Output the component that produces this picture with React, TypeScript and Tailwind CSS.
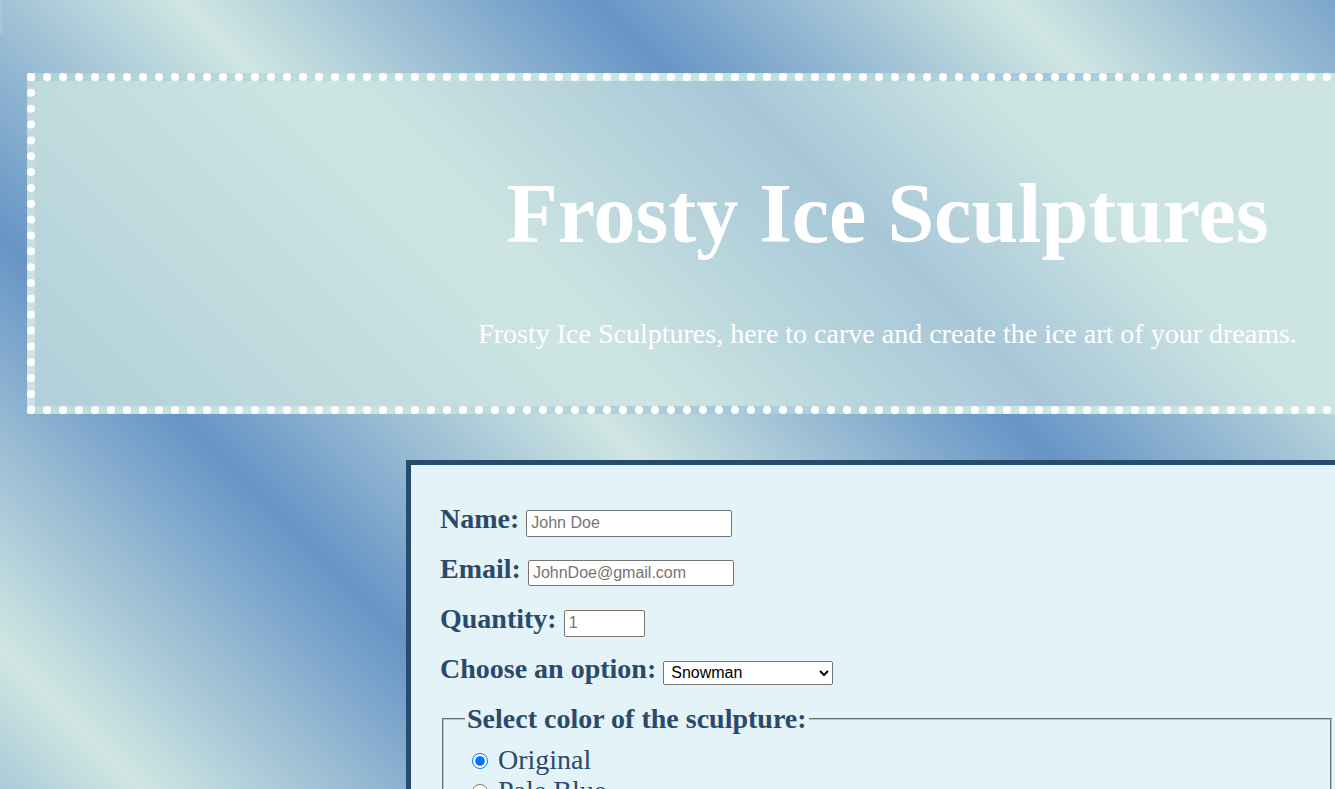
import React from "react";

export default function App() {
  const serif = "font-['Liberation_Serif','Times_New_Roman',serif]";
  const sans = "font-['Liberation_Sans',Arial,sans-serif]";
  return (
    <div
      className={`relative h-[789px] w-full overflow-hidden bg-[repeating-linear-gradient(45deg,#cfe6e2_100px,#6694c6_392px,#cfe6e2_685px)] ${serif}`}
    >
      <div className="absolute left-0 top-0 h-[35px] w-[3px] bg-white/10" />
      <div className="ml-[27px] w-[1721px] pt-[73px]">
        <header className="flex h-[341px] flex-col items-center border-8 border-dotted border-white bg-[linear-gradient(45deg,#b0cfd9_0%,#cde5e2_29%,#cde5e2_31%,#a7c7d8_50%,#cde5e2_63%,#cde5e2_85%,#bcd8dd_100%)] pt-[86px] text-center text-white">
          <h1 className="text-[84px] font-bold leading-[93px]">Frosty Ice Sculptures</h1>
          <p className="mt-[58px] text-[28px] leading-[31px]">
            Frosty Ice Sculptures, here to carve and create the ice art of your dreams.
          </p>
        </header>

        <form className="ml-[379px] mt-[46px] w-[962px] border-[5px] border-[#284a6b] bg-[#e3f3f7] px-[29px] pb-[30px] pt-[38px] text-[28px] text-[#2b4a6b]">
          <div className="flex h-[50px] items-baseline gap-[7px]">
            <span className="font-bold leading-[31px]">Name:</span>
            <input
              type="text"
              placeholder="John Doe"
              className={`h-[27px] w-[206px] rounded-[2px] border border-[#767676] bg-white px-[4px] text-[16px] text-black placeholder:text-[#757575] ${sans}`}
            />
          </div>
          <div className="flex h-[50px] items-baseline gap-[7px]">
            <span className="font-bold leading-[31px]">Email:</span>
            <input
              type="email"
              placeholder="JohnDoe@gmail.com"
              className={`h-[26px] w-[206px] rounded-[2px] border border-[#767676] bg-white px-[4px] text-[16px] text-black placeholder:text-[#757575] ${sans}`}
            />
          </div>
          <div className="flex h-[50px] items-baseline gap-[7px]">
            <span className="font-bold leading-[31px]">Quantity:</span>
            <input
              type="number"
              placeholder="1"
              className={`h-[27px] w-[81px] rounded-[2px] border border-[#767676] bg-white px-[4px] text-[16px] text-black placeholder:text-[#757575] ${sans}`}
            />
          </div>
          <div className="flex h-[50px] items-baseline gap-[7px]">
            <span className="font-bold leading-[31px]">Choose an option:</span>
            <select
              defaultValue="snowman"
              className={`h-[24px] w-[170px] rounded-[2px] border border-[#767676] bg-white pl-[3px] text-[16px] text-black ${sans}`}
            >
              <option value="snowman">Snowman</option>
              <option value="swan">Swan</option>
              <option value="castle">Castle</option>
            </select>
          </div>

          <fieldset className="mx-[2px] border-2 border-[#c0c0c0] px-[21px] pb-[18px] pt-[10px] [border-style:groove]">
            <legend className="px-[2px] font-bold leading-[31px]">Select color of the sculpture:</legend>
            {["Original", "Pale Blue", "Clear", "Frosted White"].map((c, i) => (
              <label key={c} className="block leading-[31px]">
                <input
                  type="radio"
                  name="color"
                  defaultChecked={i === 0}
                  className="ml-[7px] mr-[3px] mt-[3px] h-4 w-4 align-baseline"
                />{" "}
                {c}
              </label>
            ))}
          </fieldset>
        </form>
      </div>
    </div>
  );
}
